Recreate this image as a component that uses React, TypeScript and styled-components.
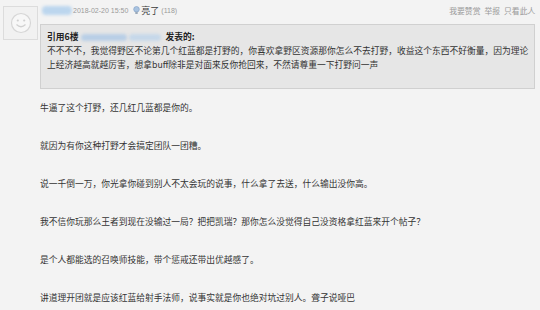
import React from "react";
import styled, { createGlobalStyle } from "styled-components";

const Global = createGlobalStyle`
  html, body { margin: 0; padding: 0; background: #f3f3f3; }
  body { width: 540px; height: 310px; overflow: hidden; font-family: "Noto Sans CJK SC", "Noto Sans", sans-serif; }
`;

const Page = styled.div`
  display: flex;
  width: 540px;
  height: 310px;
  background: #f3f3f3;
  box-sizing: border-box;
  padding: 0 12px 0 3px;
`;

const AvatarCol = styled.div`
  width: 37px;
  flex: none;
  padding-top: 6px;
`;

const Avatar = styled.div`
  width: 33px;
  height: 32px;
  border: 1px solid #dcdcdc;
  background: #f1f1f1;
  display: flex;
  align-items: center;
  justify-content: center;
`;

const Main = styled.div`
  flex: 1;
  display: flex;
  flex-direction: column;
`;

const Header = styled.div`
  display: flex;
  align-items: center;
  height: 19px;
  padding-left: 2px;
  padding-top: 1px;
  font-family: "Liberation Sans", Arial, "Noto Sans CJK SC", sans-serif;
  font-size: 7px;
  color: #9a9a9a;
`;

const Blob = styled.span<{ $w: number; $c: string; $h?: number; $ml?: number }>`
  display: inline-block;
  width: ${(p) => p.$w}px;
  height: ${(p) => p.$h ?? 9}px;
  margin-left: ${(p) => p.$ml ?? 0}px;
  border-radius: 4px;
  background: ${(p) => p.$c};
  filter: blur(1.5px);
  flex: none;
`;

const DateText = styled.span`
  margin-left: 1px;
`;

const Bright = styled.span`
  display: inline-flex;
  align-items: center;
  margin-left: 5px;
  gap: 1px;
`;

const BrightLabel = styled.span`
  font-family: "Noto Sans CJK SC", sans-serif;
  font-size: 9px;
  color: #3a3a3a;
`;

const Count = styled.span`
  margin-left: 2px;
  color: #9a9a9a;
`;

const Links = styled.div`
  margin-left: auto;
  display: flex;
  gap: 4px;
  font-family: "Noto Sans CJK SC", sans-serif;
  font-size: 7.8px;
  color: #9a9a9a;
  padding-right: 0;
`;

const Quote = styled.div`
  margin-top: 4px;
  border: 1px solid #d0d0d0;
  background: #e6e6e6;
  padding: 5px 6px 16px;
  font-size: 8.75px;
  line-height: 14px;
  color: #333;
`;

const QuoteTitle = styled.div`
  display: flex;
  align-items: center;
  font-weight: bold;
  color: #222;
`;

const TitleEnd = styled.span`
  margin-left: 4px;
`;

const QuoteLine = styled.div`
  white-space: nowrap;
`;

const Posts = styled.div`
  display: flex;
  flex-direction: column;
  gap: 24px;
  padding-top: 12px;
`;

const Para = styled.p`
  margin: 0;
  font-size: 8.75px;
  line-height: 14px;
  color: #333;
  white-space: nowrap;
`;

const Smiley = () => (
  <svg width="22" height="22" viewBox="0 0 22 22">
    <circle cx="11" cy="11" r="9.5" fill="#f7f7f7" stroke="#d6d6d6" strokeWidth="1.2" />
    <circle cx="7.8" cy="8.5" r="1.1" fill="#d0d0d0" />
    <circle cx="14.2" cy="8.5" r="1.1" fill="#d0d0d0" />
    <path d="M6.5 12.5 Q11 17 15.5 12.5" fill="none" stroke="#d0d0d0" strokeWidth="1.2" />
  </svg>
);

const Bulb = () => (
  <svg width="7" height="9" viewBox="0 0 7 9">
    <circle cx="3.5" cy="3.3" r="2.8" fill="#a9c3e0" stroke="#7f9fc6" strokeWidth="0.6" />
    <rect x="2.3" y="5.8" width="2.4" height="2.2" fill="#9aa8b8" />
  </svg>
);

const paragraphs = [
  "牛逼了这个打野，还几红几蓝都是你的。",
  "就因为有你这种打野才会搞定团队一团糟。",
  "说一千倒一万，你光拿你碰到别人不太会玩的说事，什么拿了去送，什么输出没你高。",
  "我不信你玩那么王者到现在没输过一局？把把凯瑞？那你怎么没觉得自己没资格拿红蓝来开个帖子？",
  "是个人都能选的召唤师技能，带个惩戒还带出优越感了。",
  "讲道理开团就是应该红蓝给射手法师，说事实就是你也绝对坑过别人。聋子说哑巴",
];

export default function App() {
  return (
    <>
      <Global />
      <Page>
        <AvatarCol>
          <Avatar>
            <Smiley />
          </Avatar>
        </AvatarCol>
        <Main>
          <Header>
            <Blob $w={30} $c="#bcd6ee" />
            <DateText>2018-02-20 15:50</DateText>
            <Bright>
              <Bulb />
              <BrightLabel>亮了</BrightLabel>
            </Bright>
            <Count>(118)</Count>
            <Links>
              <span>我要赞赏</span>
              <span>举报</span>
              <span>只看此人</span>
            </Links>
          </Header>
          <Quote>
            <QuoteTitle>
              <span>引用6楼</span>
              <Blob $w={46} $h={7} $ml={3} $c="#b9cfe6" />
              <Blob $w={32} $h={7} $ml={2} $c="#c6d8ea" />
              <TitleEnd>发表的:</TitleEnd>
            </QuoteTitle>
            <QuoteLine>
              不不不不，我觉得野区不论第几个红蓝都是打野的，你喜欢拿野区资源那你怎么不去打野，收益这个东西不好衡量，因为理论
            </QuoteLine>
            <QuoteLine>
              上经济越高就越厉害，想拿buff除非是对面来反你抢回来，不然请尊重一下打野问一声
            </QuoteLine>
          </Quote>
          <Posts>
            {paragraphs.map((t) => (
              <Para key={t}>{t}</Para>
            ))}
          </Posts>
        </Main>
      </Page>
    </>
  );
}
